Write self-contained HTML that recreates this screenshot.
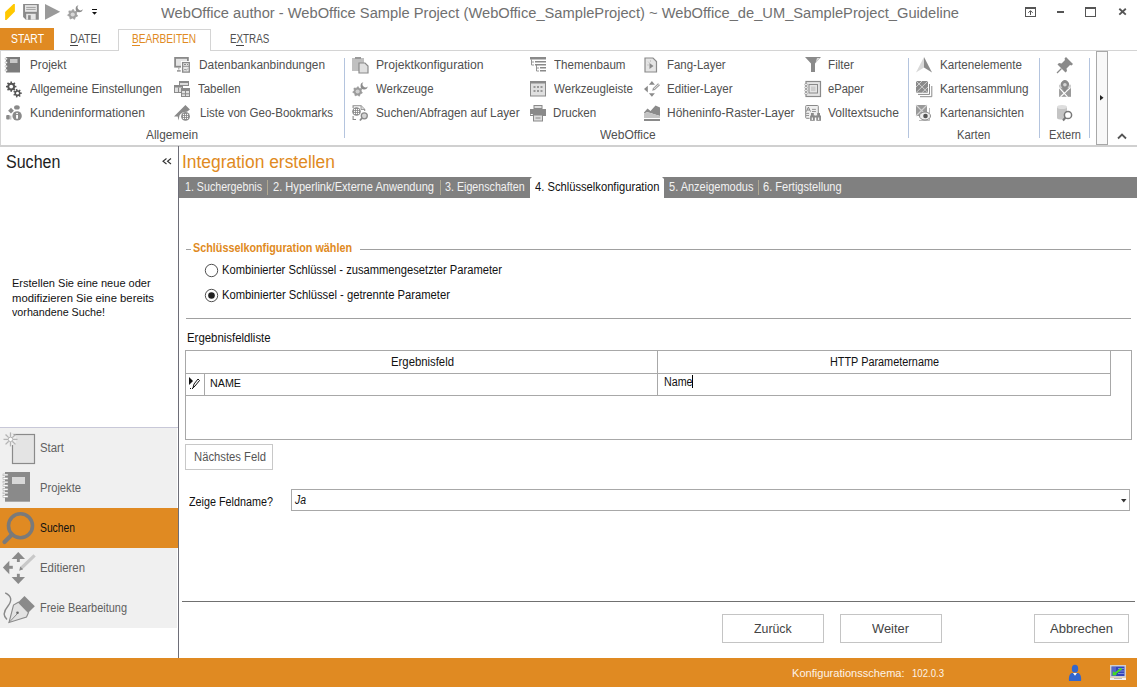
<!DOCTYPE html>
<html><head><meta charset="utf-8"><style>
html,body{margin:0;padding:0;}
body{width:1137px;height:687px;overflow:hidden;background:#fff;position:relative;font-family:"Liberation Sans", sans-serif;}
.t{position:absolute;white-space:pre;font-family:"Liberation Sans", sans-serif;}
svg{overflow:visible}
</style></head><body>
<svg style="position:absolute;left:0px;top:0px" width="64" height="24" viewBox="0 0 64 24"><polygon points="5.1,12.1 13.5,3.9 14.9,3.9 14.9,11.5 6.5,20 5.1,20" fill="#FFC800"/><path d="M23.1,3.9 H38.8 V19.7 H25.9 L23.1,16.9 Z" fill="#8a8a8a"/><rect x="25" y="5.1" width="11.9" height="6.7" fill="#e6e6e6"/><rect x="26.2" y="6.9" width="9.5" height="0.9" fill="#999"/><rect x="26.2" y="8.9" width="9.5" height="0.9" fill="#999"/><rect x="26.2" y="13.8" width="9.5" height="5.9" fill="#e6e6e6"/><rect x="28.1" y="15.2" width="2.6" height="4.5" fill="#8a8a8a"/><polygon points="45,3.9 60.2,11.8 45,19.7" fill="#9a9a9a"/></svg>
<svg style="position:absolute;left:60px;top:0px" width="30" height="25" viewBox="0 0 30 25"><polygon points="17.67,16.04 15.34,16.95 14.60,19.34 12.43,18.09 10.10,19.00 9.72,16.53 7.56,15.27 9.26,13.44 8.89,10.96 11.39,11.15 13.09,9.31 14.50,11.38 17.00,11.57 16.26,13.97" fill="#a0a0a0" stroke="#a0a0a0" stroke-width="0.8" stroke-linejoin="round"/><circle cx="12.7" cy="14.5" r="2.1" fill="#d8d8d8"/><path d="M18.5,5.2 A3.6,3.6 0 1 0 22.8,9.3 A2.6,2.6 0 1 1 18.5,5.2 Z" fill="#8c8c8c"/></svg>
<svg style="position:absolute;left:92px;top:9px" width="6" height="7" viewBox="0 0 6 7"><rect x="0" y="0" width="5" height="1" fill="#111"/><polygon points="0,3 5,3 2.5,5.8" fill="#111"/></svg>
<svg style="position:absolute;left:1017px;top:0" width="120" height="26" viewBox="1017 0 120 26"><rect x="1025" y="7" width="11" height="2" fill="#555"/><rect x="1025" y="7" width="1" height="10" fill="#555"/><rect x="1035" y="7" width="1" height="10" fill="#555"/><rect x="1025" y="16" width="11" height="1" fill="#555"/><rect x="1030" y="11" width="1" height="4" fill="#555"/><path d="M1028.3,12.8 L1030.5,10.6 L1032.7,12.8" fill="none" stroke="#555" stroke-width="1"/><rect x="1057" y="11" width="7" height="2" fill="#555"/><rect x="1085" y="7" width="11" height="2" fill="#555"/><rect x="1085" y="7" width="1" height="10" fill="#555"/><rect x="1095" y="7" width="1" height="10" fill="#555"/><rect x="1085" y="16" width="11" height="1" fill="#555"/><path d="M1119.3,8.8 L1125.8,14.6 M1125.8,8.8 L1119.3,14.6" stroke="#555" stroke-width="1.9"/></svg>
<div style="position:absolute;left:0px;top:28px;width:54px;height:22px;background:#E08A22"></div>
<div style="position:absolute;left:70px;top:44.5px;width:8px;height:1px;background:#444"></div>
<div style="position:absolute;left:118px;top:29px;width:93px;height:22px;background:#fff;border:1px solid #d4d4d4;border-bottom:none;box-sizing:border-box"></div>
<div style="position:absolute;left:132px;top:44.5px;width:8px;height:1px;background:#E08A22"></div>
<div style="position:absolute;left:236px;top:44.5px;width:8px;height:1px;background:#444"></div>
<div style="position:absolute;left:0px;top:50px;width:118px;height:1px;background:#d4d4d4"></div>
<div style="position:absolute;left:211px;top:50px;width:926px;height:1px;background:#d4d4d4"></div>
<div style="position:absolute;left:0px;top:50px;width:1px;height:96px;background:#d4d4d4"></div>
<div style="position:absolute;left:0px;top:145px;width:1137px;height:2px;background:#d0d0d0"></div>
<div style="position:absolute;left:344px;top:58px;width:1px;height:80px;background:#b4c4de"></div>
<div style="position:absolute;left:908px;top:58px;width:1px;height:80px;background:#b4c4de"></div>
<div style="position:absolute;left:1039px;top:58px;width:1px;height:80px;background:#b4c4de"></div>
<div style="position:absolute;left:1089px;top:58px;width:1px;height:80px;background:#b4c4de"></div>
<div style="position:absolute;left:1096px;top:51px;width:12px;height:94px;background:#f8f8f8;border:1px solid #a8a8a8;box-sizing:border-box"></div>
<svg style="position:absolute;left:1100px;top:95px" width="4" height="6" viewBox="0 0 4 6"><polygon points="0,0 3.5,2.75 0,5.5" fill="#222"/></svg>
<svg style="position:absolute;left:1117px;top:133px" width="10" height="7" viewBox="0 0 10 7"><path d="M1,5.5 L5,1.5 L9,5.5" fill="none" stroke="#555" stroke-width="1.8"/></svg>
<div style="position:absolute;left:178px;top:146px;width:1px;height:512px;background:#6e6e78"></div>
<svg style="position:absolute;left:162px;top:158px" width="10" height="7" viewBox="0 0 10 7"><path d="M4.5,0.5 L1,3.25 L4.5,6 M9,0.5 L5.5,3.25 L9,6" fill="none" stroke="#333" stroke-width="1.1"/></svg>
<div style="position:absolute;left:0px;top:427px;width:178px;height:1px;background:#c8c8d8"></div>
<div style="position:absolute;left:0px;top:428px;width:177px;height:200px;background:#f0f0f0"></div>
<div style="position:absolute;left:0px;top:508px;width:178px;height:40px;background:#E08A22"></div>
<div style="position:absolute;left:179px;top:177px;width:958px;height:21px;background:#808080"></div>
<div style="position:absolute;left:530px;top:179px;width:134px;height:19px;background:#fff"></div>
<div style="position:absolute;left:532px;top:177px;width:130px;height:2px;background:#fff"></div>
<svg style="position:absolute;left:530px;top:177px" width="2" height="2" viewBox="0 0 2 2"><polygon points="0,0 2,0 0,2" fill="#808080"/><polygon points="2,0 2,2 0,2" fill="#fff"/></svg>
<svg style="position:absolute;left:662px;top:177px" width="2" height="2" viewBox="0 0 2 2"><polygon points="0,0 2,0 2,2" fill="#808080"/><polygon points="0,0 0,2 2,2" fill="#fff"/></svg>
<div style="position:absolute;left:267px;top:180px;width:1px;height:15px;background:#b0a890"></div>
<div style="position:absolute;left:440px;top:180px;width:1px;height:15px;background:#b0a890"></div>
<div style="position:absolute;left:758px;top:180px;width:1px;height:15px;background:#b0a890"></div>
<div style="position:absolute;left:186px;top:249px;width:5px;height:1px;background:#a0a0a0"></div>
<div style="position:absolute;left:360px;top:249px;width:771px;height:1px;background:#a0a0a0"></div>
<svg style="position:absolute;left:204px;top:263px" width="15" height="15" viewBox="0 0 15 15"><circle cx="7.5" cy="7.5" r="6.2" fill="#fff" stroke="#505050" stroke-width="1"/></svg>
<svg style="position:absolute;left:204px;top:288px" width="15" height="15" viewBox="0 0 15 15"><circle cx="7.5" cy="7.5" r="6.2" fill="#fff" stroke="#505050" stroke-width="1"/><circle cx="7.5" cy="7.5" r="3.3" fill="#222"/></svg>
<div style="position:absolute;left:186px;top:318px;width:945px;height:1px;background:#a0a0a0"></div>
<div style="position:absolute;left:185px;top:350px;width:947px;height:90px;border:1px solid #a8a8a8;box-sizing:border-box"></div>
<div style="position:absolute;left:185px;top:373px;width:926px;height:1px;background:#a8a8a8"></div>
<div style="position:absolute;left:185px;top:395px;width:926px;height:1px;background:#a8a8a8"></div>
<div style="position:absolute;left:1110px;top:350px;width:1px;height:46px;background:#a8a8a8"></div>
<div style="position:absolute;left:204px;top:373px;width:1px;height:23px;background:#a8a8a8"></div>
<div style="position:absolute;left:657px;top:350px;width:1px;height:46px;background:#a8a8a8"></div>
<div style="position:absolute;left:692px;top:375px;width:1px;height:13px;background:#000"></div>
<svg style="position:absolute;left:188px;top:376px" width="14" height="14" viewBox="0 0 14 14"><polygon points="1,1 5,5 1,9" fill="#111"/><path d="M5,12 L6,8 L10,3 L11.5,4.5 L7,10 Z" fill="none" stroke="#111" stroke-width="1"/><rect x="2" y="12" width="1" height="1" fill="#111"/><rect x="4" y="12" width="1" height="1" fill="#111"/></svg>
<div style="position:absolute;left:185px;top:444px;width:88px;height:26px;border:1px solid #c8c8c8;box-sizing:border-box;background:#fff"></div>
<div style="position:absolute;left:291px;top:489px;width:839px;height:22px;border:1px solid #a8a8a8;box-sizing:border-box;background:#fff"></div>
<svg style="position:absolute;left:1121px;top:499px" width="6" height="4" viewBox="0 0 6 4"><polygon points="0,0 5.5,0 2.75,3.5" fill="#333"/></svg>
<div style="position:absolute;left:182px;top:601px;width:953px;height:1px;background:#707070"></div>
<div style="position:absolute;left:722px;top:614px;width:102px;height:29px;border:1px solid #c4c4c4;box-sizing:border-box"></div>
<div style="position:absolute;left:840px;top:614px;width:102px;height:29px;border:1px solid #c4c4c4;box-sizing:border-box"></div>
<div style="position:absolute;left:1034px;top:614px;width:95px;height:29px;border:1px solid #c4c4c4;box-sizing:border-box"></div>
<div style="position:absolute;left:0px;top:658px;width:1137px;height:29px;background:#E08A22"></div>
<svg style="position:absolute;left:1068px;top:664px" width="14" height="18" viewBox="0 0 14 18"><ellipse cx="7" cy="4.7" rx="3.2" ry="3.9" fill="#3366cc"/><path d="M1,17 C0.5,13 1.5,9.5 4,9 L10,9 C12.5,9.5 13.5,13 13,17 Z" fill="#3366cc"/><polygon points="5,9 9,9 7,11.8" fill="#fff"/></svg>
<svg style="position:absolute;left:1110px;top:665px" width="16" height="15" viewBox="0 0 16 15"><rect x="0" y="0" width="16" height="12.5" fill="#d0d0d0"/><rect x="1.5" y="1.5" width="13" height="9.5" fill="#3344bb"/><path d="M8,3.5 H14.5 M8,6 H14.5 M8,8.5 H14.5" stroke="#8899dd" stroke-width="0.9"/><path d="M3,1.5 V11 M5,1.5 V11" stroke="#8899dd" stroke-width="0.8"/><path d="M11.5,3.5 L4.5,9" stroke="#44dd22" stroke-width="2"/><polygon points="2.5,10.5 3,6 7,10" fill="#44dd22"/><rect x="0" y="12.5" width="16" height="2.5" fill="#f4f4f4"/><rect x="4" y="13" width="8" height="1" fill="#bbb"/></svg>
<svg style="position:absolute;left:5px;top:57px" width="16" height="16" viewBox="0 0 16 16"><rect x="1" y="0" width="14" height="15.5" fill="#7c7c7c"/><rect x="5" y="2" width="7.5" height="4" fill="#c8c8c8"/><circle cx="1.2" cy="1.8" r="1.1" fill="#fff" stroke="#999" stroke-width="0.5"/><circle cx="1.2" cy="5.5" r="1.1" fill="#fff" stroke="#999" stroke-width="0.5"/><circle cx="1.2" cy="9.3" r="1.1" fill="#fff" stroke="#999" stroke-width="0.5"/><circle cx="1.2" cy="13.2" r="1.1" fill="#fff" stroke="#999" stroke-width="0.5"/></svg>
<svg style="position:absolute;left:6px;top:81px" width="16" height="16" viewBox="0 0 16 16"><circle cx="5.2" cy="5.6" r="3.9" fill="#555"/><line x1="5.2" y1="5.6" x2="10.40" y2="5.60" stroke="#555" stroke-width="1.6"/><line x1="5.2" y1="5.6" x2="8.88" y2="9.28" stroke="#555" stroke-width="1.6"/><line x1="5.2" y1="5.6" x2="5.20" y2="10.80" stroke="#555" stroke-width="1.6"/><line x1="5.2" y1="5.6" x2="1.52" y2="9.28" stroke="#555" stroke-width="1.6"/><line x1="5.2" y1="5.6" x2="0.00" y2="5.60" stroke="#555" stroke-width="1.6"/><line x1="5.2" y1="5.6" x2="1.52" y2="1.92" stroke="#555" stroke-width="1.6"/><line x1="5.2" y1="5.6" x2="5.20" y2="0.40" stroke="#555" stroke-width="1.6"/><line x1="5.2" y1="5.6" x2="8.88" y2="1.92" stroke="#555" stroke-width="1.6"/><circle cx="5.2" cy="5.6" r="1.9" fill="#fff"/><circle cx="11.5" cy="12.2" r="3.0" fill="#555"/><line x1="11.5" y1="12.2" x2="15.80" y2="12.20" stroke="#555" stroke-width="1.4"/><line x1="11.5" y1="12.2" x2="14.18" y2="15.56" stroke="#555" stroke-width="1.4"/><line x1="11.5" y1="12.2" x2="10.54" y2="16.39" stroke="#555" stroke-width="1.4"/><line x1="11.5" y1="12.2" x2="7.63" y2="14.07" stroke="#555" stroke-width="1.4"/><line x1="11.5" y1="12.2" x2="7.63" y2="10.33" stroke="#555" stroke-width="1.4"/><line x1="11.5" y1="12.2" x2="10.54" y2="8.01" stroke="#555" stroke-width="1.4"/><line x1="11.5" y1="12.2" x2="14.18" y2="8.84" stroke="#555" stroke-width="1.4"/><circle cx="11.5" cy="12.2" r="1.4" fill="#fff"/></svg>
<svg style="position:absolute;left:6px;top:105px" width="16" height="16" viewBox="0 0 16 16"><ellipse cx="10.9" cy="2.4" rx="2.8" ry="2.2" fill="#8a8a8a"/><polygon points="5,2.8 7.9,5.7 5,8.6 2.1,5.7" fill="#8a8a8a"/><rect x="0.2" y="10.1" width="3.6" height="4.5" rx="1" fill="#8a8a8a"/><rect x="3.8" y="10.6" width="1.6" height="4" fill="#c8c8c8"/><circle cx="11.1" cy="10.9" r="4.7" fill="#8a8a8a"/><rect x="10.1" y="7.9" width="1.9" height="1" fill="#fff"/><rect x="10.1" y="9.9" width="1.9" height="3.8" fill="#fff"/></svg>
<svg style="position:absolute;left:174px;top:57px" width="16" height="16" viewBox="0 0 16 16"><rect x="1.1" y="0.9" width="12.8" height="8.8" fill="#e4e4e4" stroke="#8a8a8a" stroke-width="1.8"/><rect x="4.4" y="10.6" width="0.9" height="2" fill="#8a8a8a"/><rect x="3" y="13.2" width="3.7" height="1.4" fill="#8a8a8a"/><rect x="7" y="4" width="9.9" height="12.7" fill="#fff"/><rect x="8.6" y="5.6" width="6.7" height="9.5" fill="#e8e8e8" stroke="#8a8a8a" stroke-width="1.3"/><path d="M8.6,9.3 H15.3" stroke="#8a8a8a" stroke-width="0.9"/><rect x="10" y="7" width="2" height="1" fill="#8a8a8a"/><rect x="13" y="7" width="1" height="1" fill="#8a8a8a"/><path d="M9.8,13.5 L11,12 L12.2,13.3 L13.8,11.5" fill="none" stroke="#8a8a8a" stroke-width="0.8"/></svg>
<svg style="position:absolute;left:174px;top:81px" width="16" height="16" viewBox="0 0 16 16"><rect x="5" y="0" width="10" height="5" fill="#8a8a8a"/><rect x="6" y="2" width="8" height="2" fill="#ddd"/><rect x="0" y="4" width="9" height="8" fill="#8a8a8a"/><rect x="1" y="6.5" width="7" height="4.5" fill="#e0e0e0"/><rect x="4" y="6.5" width="1" height="4.5" fill="#8a8a8a"/><rect x="7" y="7" width="9" height="9" fill="#8a8a8a"/><rect x="8" y="10" width="7" height="5" fill="#e0e0e0"/><rect x="11" y="10" width="1" height="5" fill="#8a8a8a"/><rect x="8" y="12.3" width="7" height="1" fill="#8a8a8a"/></svg>
<svg style="position:absolute;left:174px;top:105px" width="16" height="16" viewBox="0 0 16 16"><path d="M0,11.4 L11.4,0 L15.9,4.5 L13,6.8 Q7,7 5.5,10.5 L4.5,15.6 L3.7,11.5 Z" fill="#8a8a8a"/><circle cx="11.5" cy="11.4" r="4.4" fill="#8a8a8a"/><rect x="8.95" y="8.85" width="1.1" height="1.1" fill="#fff"/><rect x="8.95" y="10.85" width="1.1" height="1.1" fill="#fff"/><rect x="8.95" y="12.85" width="1.1" height="1.1" fill="#fff"/><rect x="10.95" y="8.85" width="1.1" height="1.1" fill="#fff"/><rect x="10.95" y="10.85" width="1.1" height="1.1" fill="#fff"/><rect x="10.95" y="12.85" width="1.1" height="1.1" fill="#fff"/><rect x="12.95" y="8.85" width="1.1" height="1.1" fill="#fff"/><rect x="12.95" y="10.85" width="1.1" height="1.1" fill="#fff"/><rect x="12.95" y="12.85" width="1.1" height="1.1" fill="#fff"/></svg>
<svg style="position:absolute;left:352px;top:57px" width="16" height="16" viewBox="0 0 16 16"><rect x="0" y="1" width="12" height="13" fill="#c0c0c0"/><rect x="3" y="0" width="6" height="2" fill="#999"/><path d="M7,6 H13 L16,9 V16 H7 Z" fill="#e0e0e0" stroke="#8a8a8a" stroke-width="1.2"/></svg>
<svg style="position:absolute;left:352px;top:81px" width="16" height="16" viewBox="0 0 16 16"><polygon points="10.38,11.98 8.16,12.88 7.42,15.16 5.34,13.99 3.10,14.83 2.71,12.47 0.66,11.24 2.26,9.47 1.94,7.10 4.32,7.24 5.98,5.51 7.35,7.47 9.73,7.69 9.06,9.98" fill="#9a9a9a" stroke="#9a9a9a" stroke-width="0.7" stroke-linejoin="round"/><circle cx="5.6" cy="10.5" r="2.1" fill="#d0d0d0"/><path d="M11.4,1.3 A3.6,3.6 0 1 0 15.7,5.4 A2.6,2.6 0 1 1 11.4,1.3 Z" fill="#8c8c8c"/></svg>
<svg style="position:absolute;left:352px;top:105px" width="16" height="16" viewBox="0 0 16 16"><path d="M1.1,3 V0.7 H9 L12.7,4.5 V6" fill="none" stroke="#8a8a8a" stroke-width="1.1"/><path d="M1.1,11 V14.5 H4" fill="none" stroke="#8a8a8a" stroke-width="1.1"/><path d="M9,0.7 V4.5 H12.7" fill="#ddd" stroke="#8a8a8a" stroke-width="0.8"/><circle cx="4.5" cy="6.5" r="4.3" fill="#8a8a8a"/><rect x="1.9" y="3.9" width="1.2" height="1.2" fill="#fff"/><rect x="1.9" y="5.9" width="1.2" height="1.2" fill="#fff"/><rect x="1.9" y="7.9" width="1.2" height="1.2" fill="#fff"/><rect x="3.9" y="3.9" width="1.2" height="1.2" fill="#fff"/><rect x="3.9" y="5.9" width="1.2" height="1.2" fill="#fff"/><rect x="3.9" y="7.9" width="1.2" height="1.2" fill="#fff"/><rect x="5.9" y="3.9" width="1.2" height="1.2" fill="#fff"/><rect x="5.9" y="5.9" width="1.2" height="1.2" fill="#fff"/><rect x="5.9" y="7.9" width="1.2" height="1.2" fill="#fff"/><circle cx="12.3" cy="10.8" r="3" fill="#d4d4d4" stroke="#8a8a8a" stroke-width="1.3"/><path d="M10,13.2 L7.9,15.5" stroke="#8a8a8a" stroke-width="1.8"/></svg>
<svg style="position:absolute;left:530px;top:57px" width="16" height="16" viewBox="0 0 16 16"><rect x="0" y="0" width="16" height="2.5" fill="#8a8a8a"/><path d="M1.5,2.5 V8 H4 M1.5,5 H4 M6.5,8 V14 H9 M6.5,11 H9" fill="none" stroke="#8a8a8a" stroke-width="0.9"/><rect x="5" y="4" width="11" height="1.5" fill="#8a8a8a"/><rect x="5" y="7" width="11" height="1.5" fill="#8a8a8a"/><rect x="10" y="10" width="6" height="1.5" fill="#8a8a8a"/><rect x="10" y="13" width="6" height="1.5" fill="#8a8a8a"/></svg>
<svg style="position:absolute;left:530px;top:81px" width="16" height="16" viewBox="0 0 16 16"><rect x="0.5" y="0.5" width="15" height="14.5" fill="#e0e0e0" stroke="#8a8a8a" stroke-width="1"/><rect x="0" y="0" width="16" height="2.5" fill="#8a8a8a"/><rect x="3.5" y="5" width="2" height="2" fill="#999"/><rect x="3.5" y="9" width="2" height="2" fill="#999"/><rect x="7" y="5" width="2" height="2" fill="#999"/><rect x="7" y="9" width="2" height="2" fill="#999"/><rect x="10.5" y="5" width="2" height="2" fill="#999"/><rect x="10.5" y="9" width="2" height="2" fill="#999"/></svg>
<svg style="position:absolute;left:530px;top:105px" width="16" height="16" viewBox="0 0 16 16"><rect x="3.5" y="0" width="9" height="4" fill="#8a8a8a"/><rect x="4.5" y="1" width="7" height="2" fill="#ddd"/><rect x="0" y="4" width="16" height="7" fill="#8a8a8a"/><rect x="0.8" y="9" width="2" height="1" fill="#fff"/><rect x="3.5" y="10" width="9" height="6" fill="#ddd" stroke="#8a8a8a" stroke-width="1"/><rect x="5.5" y="12.5" width="5" height="1" fill="#8a8a8a"/></svg>
<svg style="position:absolute;left:644px;top:57px" width="16" height="16" viewBox="0 0 16 16"><path d="M1,1 H9 L12.5,4.5 V15 H1 Z" fill="#e4e4e4" stroke="#8a8a8a" stroke-width="1.2"/><polygon points="5.5,6 9.5,9 5.5,12" fill="#8a8a8a"/><path d="M6.5,3 V5 M3,8 H5 M4,4.5 L5.5,6" stroke="#bbb" stroke-width="0.7"/></svg>
<svg style="position:absolute;left:644px;top:81px" width="16" height="16" viewBox="0 0 16 16"><polygon points="4.9,3.7 7.9,0 10.9,3.7" fill="#8a8a8a"/><polygon points="4.9,12.2 7.9,15.8 10.9,12.2" fill="#8a8a8a"/><polygon points="3.8,4.8 0,8.1 3.8,11.4" fill="#8a8a8a"/><path d="M9.6,8.4 L15,3.2" stroke="#8a8a8a" stroke-width="2.6"/><path d="M9.8,8.2 L14.8,3.4" stroke="#e0e0e0" stroke-width="1.1"/><polygon points="8.2,9.8 8.9,7.5 10.5,9.1" fill="#8a8a8a"/></svg>
<svg style="position:absolute;left:644px;top:105px" width="16" height="16" viewBox="0 0 16 16"><path d="M0,7.5 L3.5,3.5 L6.5,6 L11.5,0.5 L16,2.5 V11 L11,9.5 L6.5,8 L3,7.3 L0,8.5 Z" fill="#8a8a8a"/><path d="M0,8.5 L3,7.3 L6.5,8 L11,9.5 L16,11 V13 H0 Z" fill="#c4c4c4"/><rect x="0" y="14" width="16" height="2" fill="#8a8a8a"/></svg>
<svg style="position:absolute;left:805px;top:57px" width="16" height="16" viewBox="0 0 16 16"><polygon points="0,0 16,0 10,6.5 10,15 6,15 6,6.5" fill="#8a8a8a"/><polygon points="12,1 15,1 10.5,6" fill="#ddd"/></svg>
<svg style="position:absolute;left:805px;top:81px" width="16" height="16" viewBox="0 0 16 16"><rect x="1" y="0.5" width="14.5" height="15" fill="#e4e4e4" stroke="#8a8a8a" stroke-width="1.2"/><rect x="4" y="3.5" width="8.5" height="8.5" fill="none" stroke="#8a8a8a" stroke-width="1"/><rect x="6" y="5.5" width="4.5" height="4.5" fill="#ccc"/><circle cx="1" cy="3.5" r="1.2" fill="#fff" stroke="#8a8a8a" stroke-width="0.7"/><circle cx="1" cy="6.5" r="1.2" fill="#fff" stroke="#8a8a8a" stroke-width="0.7"/><circle cx="1" cy="9.5" r="1.2" fill="#fff" stroke="#8a8a8a" stroke-width="0.7"/><circle cx="1" cy="12.5" r="1.2" fill="#fff" stroke="#8a8a8a" stroke-width="0.7"/></svg>
<svg style="position:absolute;left:805px;top:105px" width="16" height="16" viewBox="0 0 16 16"><rect x="0.7" y="0.5" width="12.6" height="12.8" rx="0.8" fill="#efefef" stroke="#8a8a8a" stroke-width="1"/><path d="M1.3,6.6 L3.4,2.1 L5.5,6.6 M2.2,5 H4.6" fill="none" stroke="#8a8a8a" stroke-width="1"/><path d="M7,4.4 H10.9 M7,6.5 H10.9 M1.1,8.4 H4.1 M1.1,10.5 H4.1" stroke="#8a8a8a" stroke-width="0.9"/><rect x="4.6" y="10.2" width="11.9" height="6" fill="#fff"/><rect x="5.1" y="10.5" width="4.7" height="5.3" fill="#8a8a8a"/><rect x="11.3" y="10.5" width="4.7" height="5.3" fill="#8a8a8a"/><rect x="6" y="8" width="2.8" height="3" fill="#8a8a8a"/><rect x="12.2" y="8" width="2.8" height="3" fill="#8a8a8a"/><rect x="9" y="10.5" width="3" height="2" fill="#8a8a8a"/><rect x="6.7" y="12.5" width="1.3" height="2.5" fill="#eee"/><rect x="12.9" y="12.5" width="1.3" height="2.5" fill="#eee"/></svg>
<svg style="position:absolute;left:916px;top:57px" width="16" height="16" viewBox="0 0 16 16"><polygon points="8,0 8,10.5 0,15.5" fill="#d8d8d8"/><polygon points="8,0 16,15.5 8,10.5" fill="#8a8a8a"/></svg>
<svg style="position:absolute;left:916px;top:81px" width="16" height="16" viewBox="0 0 16 16"><rect x="0" y="0" width="12" height="11.7" fill="#8a8a8a"/><path d="M0,0 L12,11.7 M12,0 L0,11.7 M0,6 L6,0 M6,11.7 L12,6" stroke="#cfcfcf" stroke-width="1"/><path d="M13.5,3 V13.4 H2" fill="none" stroke="#8a8a8a" stroke-width="1"/><path d="M15.8,5 V15.7 H4" fill="none" stroke="#8a8a8a" stroke-width="1"/></svg>
<svg style="position:absolute;left:916px;top:105px" width="16" height="16" viewBox="0 0 16 16"><rect x="0" y="0" width="11" height="11" fill="#9a9a9a"/><path d="M0,0 L11,11 M11,0 L0,11" stroke="#d4d4d4" stroke-width="1.1"/><path d="M13.5,3 V15.5 H3" fill="none" stroke="#aaa" stroke-width="0.8"/><ellipse cx="9" cy="11" rx="5.5" ry="4" fill="#eee" stroke="#8a8a8a" stroke-width="1"/><circle cx="9.5" cy="11" r="2.3" fill="#555"/></svg>
<svg style="position:absolute;left:1057px;top:57px" width="16" height="16" viewBox="0 0 16 16"><polygon points="9,0 16,7 14.5,8.5 13,8 9.5,11.5 10,14 8.5,15.5 0.5,7.5 2,6 4.5,6.5 8,3 7.5,1.5" fill="#8a8a8a"/><path d="M4.5,11.5 L0,16" stroke="#8a8a8a" stroke-width="1.3"/></svg>
<svg style="position:absolute;left:1058px;top:81px" width="16" height="16" viewBox="0 0 16 16"><rect x="1.1" y="3.9" width="11.9" height="11.9" fill="#9a9a9a"/><rect x="1.1" y="3.9" width="11.9" height="3" fill="#d0d0d0"/><path d="M1.1,6.6 L9.5,15.8 M12.4,6.6 L2.5,15.8" stroke="#fff" stroke-width="1.2"/><path d="M6.9,11.3 L3.4,5.5 A4.1,4.1 0 1 1 10.4,5.5 Z" fill="#8a8a8a"/><circle cx="6.9" cy="3.7" r="1.8" fill="#d4d4d4"/></svg>
<svg style="position:absolute;left:1057px;top:105px" width="16" height="16" viewBox="0 0 16 16"><path d="M0,2 V13 C0,15 10,15 10,13 V2 Z" fill="#c4c4c4"/><ellipse cx="5" cy="2" rx="5" ry="2" fill="#dedede"/><circle cx="11" cy="10" r="3.6" fill="#fff" stroke="#777" stroke-width="1.5"/><path d="M8.5,12.5 L6,15.5" stroke="#777" stroke-width="2"/></svg>
<svg style="position:absolute;left:0;top:0" width="178" height="687"><rect x="12.5" y="434.5" width="22" height="29" fill="#e4e4e4" stroke="#8a8a8a" stroke-width="1.2"/><circle cx="10.5" cy="439.4" r="6" fill="#efefef"/><line x1="13.00" y1="439.40" x2="17.50" y2="439.40" stroke="#b4b4b4" stroke-width="1.3"/><line x1="12.27" y1="441.17" x2="15.45" y2="444.35" stroke="#b4b4b4" stroke-width="1.3"/><line x1="10.50" y1="441.90" x2="10.50" y2="446.40" stroke="#b4b4b4" stroke-width="1.3"/><line x1="8.73" y1="441.17" x2="5.55" y2="444.35" stroke="#b4b4b4" stroke-width="1.3"/><line x1="8.00" y1="439.40" x2="3.50" y2="439.40" stroke="#b4b4b4" stroke-width="1.3"/><line x1="8.73" y1="437.63" x2="5.55" y2="434.45" stroke="#b4b4b4" stroke-width="1.3"/><line x1="10.50" y1="436.90" x2="10.50" y2="432.40" stroke="#b4b4b4" stroke-width="1.3"/><line x1="12.27" y1="437.63" x2="15.45" y2="434.45" stroke="#b4b4b4" stroke-width="1.3"/><circle cx="10.5" cy="439.4" r="2.2" fill="#fff" stroke="#b4b4b4" stroke-width="1"/><rect x="5" y="472" width="25" height="29.7" fill="#8a8a8a"/><rect x="12" y="477" width="13" height="7" fill="#d8d8d8"/><rect x="3" y="474.0" width="5" height="1.8" fill="#fff" stroke="#999" stroke-width="0.5"/><rect x="3" y="477.6" width="5" height="1.8" fill="#fff" stroke="#999" stroke-width="0.5"/><rect x="3" y="481.2" width="5" height="1.8" fill="#fff" stroke="#999" stroke-width="0.5"/><rect x="3" y="484.8" width="5" height="1.8" fill="#fff" stroke="#999" stroke-width="0.5"/><rect x="3" y="488.4" width="5" height="1.8" fill="#fff" stroke="#999" stroke-width="0.5"/><rect x="3" y="492.0" width="5" height="1.8" fill="#fff" stroke="#999" stroke-width="0.5"/><rect x="3" y="495.6" width="5" height="1.8" fill="#fff" stroke="#999" stroke-width="0.5"/><circle cx="20.5" cy="525.8" r="12" fill="none" stroke="#7a7a7a" stroke-width="3.6"/><path d="M12,534.5 L4.5,542" stroke="#7a7a7a" stroke-width="4.2" stroke-linecap="round"/><polygon points="11.6,559 18.3,552 25,559" fill="#8a8a8a"/><rect x="16.9" y="558.5" width="2.9" height="3.5" fill="#8a8a8a"/><polygon points="11.6,577 18.3,584 25,577" fill="#8a8a8a"/><rect x="16.9" y="573.8" width="2.9" height="3.5" fill="#8a8a8a"/><polygon points="9.3,560.8 2.9,567.5 9.3,574.2" fill="#8a8a8a"/><rect x="9" y="565.8" width="3.8" height="3" fill="#8a8a8a"/><path d="M22,567.5 L33.5,556.5" stroke="#c8c8c8" stroke-width="3.2" stroke-linecap="square"/><polygon points="19.2,570.7 20.2,566.5 23.2,569.3" fill="#8a8a8a"/><path d="M5.2,592.8 C12,596 12,601 8,606 C3,612 3,616 7,619.5" fill="none" stroke="#8a8a8a" stroke-width="1.4"/><polygon points="24.5,596 34.8,606.3 28.5,612.5 18.3,602.2" fill="#8a8a8a"/><path d="M18.3,602.2 L28.5,612.5 L26.5,617 L9,622.5 L13.5,605 Z" fill="#e2e2e2" stroke="#8a8a8a" stroke-width="1.1"/><path d="M9,622.5 L17.5,613.5" stroke="#8a8a8a" stroke-width="1"/><circle cx="17.5" cy="612.8" r="1.3" fill="#666"/></svg>
<div class="t" style="left:161px;top:5px;font-size:15.4px;line-height:15.4px;color:#707070;transform:scaleX(0.9540);transform-origin:0 0;">WebOffice author - WebOffice Sample Project (WebOffice_SampleProject) ~ WebOffice_de_UM_SampleProject_Guideline</div>
<div class="t" style="left:11px;top:33px;font-size:12px;line-height:12px;color:#ffffff;transform:scaleX(0.8631);transform-origin:0 0;">START</div>
<div class="t" style="left:70px;top:33px;font-size:12px;line-height:12px;color:#505050;transform:scaleX(0.8882);transform-origin:0 0;">DATEI</div>
<div class="t" style="left:132.2px;top:33px;font-size:12px;line-height:12px;color:#E08A22;transform:scaleX(0.8444);transform-origin:0 0;">BEARBEITEN</div>
<div class="t" style="left:229.6px;top:33px;font-size:12px;line-height:12px;color:#505050;transform:scaleX(0.8185);transform-origin:0 0;">EXTRAS</div>
<div class="t" style="left:29.5px;top:59px;font-size:12px;line-height:12px;color:#505050;transform:scaleX(0.9743);transform-origin:0 0;">Projekt</div>
<div class="t" style="left:29.5px;top:83px;font-size:12px;line-height:12px;color:#505050;transform:scaleX(0.9795);transform-origin:0 0;">Allgemeine Einstellungen</div>
<div class="t" style="left:29.5px;top:107px;font-size:12px;line-height:12px;color:#505050;transform:scaleX(1.0079);transform-origin:0 0;">Kundeninformationen</div>
<div class="t" style="left:198.8px;top:59px;font-size:12px;line-height:12px;color:#505050;transform:scaleX(0.9886);transform-origin:0 0;">Datenbankanbindungen</div>
<div class="t" style="left:197.6px;top:83px;font-size:12px;line-height:12px;color:#505050;transform:scaleX(0.9530);transform-origin:0 0;">Tabellen</div>
<div class="t" style="left:199.8px;top:107px;font-size:12px;line-height:12px;color:#505050;transform:scaleX(0.9633);transform-origin:0 0;">Liste von Geo-Bookmarks</div>
<div class="t" style="left:376.4px;top:59px;font-size:12px;line-height:12px;color:#505050;transform:scaleX(1.0145);transform-origin:0 0;">Projektkonfiguration</div>
<div class="t" style="left:376.4px;top:83px;font-size:12px;line-height:12px;color:#505050;transform:scaleX(0.9507);transform-origin:0 0;">Werkzeuge</div>
<div class="t" style="left:376.4px;top:107px;font-size:12px;line-height:12px;color:#505050;transform:scaleX(0.9828);transform-origin:0 0;">Suchen/Abfragen auf Layer</div>
<div class="t" style="left:554.4px;top:59px;font-size:12px;line-height:12px;color:#505050;transform:scaleX(0.9656);transform-origin:0 0;">Themenbaum</div>
<div class="t" style="left:554.4px;top:83px;font-size:12px;line-height:12px;color:#505050;transform:scaleX(0.9654);transform-origin:0 0;">Werkzeugleiste</div>
<div class="t" style="left:553.2px;top:107px;font-size:12px;line-height:12px;color:#505050;transform:scaleX(0.9690);transform-origin:0 0;">Drucken</div>
<div class="t" style="left:667.4px;top:59px;font-size:12px;line-height:12px;color:#505050;transform:scaleX(0.9548);transform-origin:0 0;">Fang-Layer</div>
<div class="t" style="left:667.4px;top:83px;font-size:12px;line-height:12px;color:#505050;transform:scaleX(0.9643);transform-origin:0 0;">Editier-Layer</div>
<div class="t" style="left:667.4px;top:107px;font-size:12px;line-height:12px;color:#505050;transform:scaleX(0.9964);transform-origin:0 0;">Höheninfo-Raster-Layer</div>
<div class="t" style="left:828.1px;top:59px;font-size:12px;line-height:12px;color:#505050;transform:scaleX(0.9748);transform-origin:0 0;">Filter</div>
<div class="t" style="left:828.1px;top:83px;font-size:12px;line-height:12px;color:#505050;transform:scaleX(0.9302);transform-origin:0 0;">ePaper</div>
<div class="t" style="left:828.1px;top:107px;font-size:12px;line-height:12px;color:#505050;transform:scaleX(1.0040);transform-origin:0 0;">Volltextsuche</div>
<div class="t" style="left:940.1px;top:59px;font-size:12px;line-height:12px;color:#505050;transform:scaleX(0.9677);transform-origin:0 0;">Kartenelemente</div>
<div class="t" style="left:940.1px;top:83px;font-size:12px;line-height:12px;color:#505050;transform:scaleX(0.9766);transform-origin:0 0;">Kartensammlung</div>
<div class="t" style="left:939.5px;top:107px;font-size:12px;line-height:12px;color:#505050;transform:scaleX(0.9685);transform-origin:0 0;">Kartenansichten</div>
<div class="t" style="left:146px;top:129px;font-size:12px;line-height:12px;color:#505050;transform:scaleX(0.9867);transform-origin:0 0;">Allgemein</div>
<div class="t" style="left:599.6px;top:129px;font-size:12px;line-height:12px;color:#505050;transform:scaleX(1.0001);transform-origin:0 0;">WebOffice</div>
<div class="t" style="left:957.2px;top:129px;font-size:12px;line-height:12px;color:#505050;transform:scaleX(0.9418);transform-origin:0 0;">Karten</div>
<div class="t" style="left:1049.4px;top:129px;font-size:12px;line-height:12px;color:#505050;transform:scaleX(0.9225);transform-origin:0 0;">Extern</div>
<div class="t" style="left:6.3px;top:153px;font-size:18px;line-height:18px;color:#1e1e1e;transform:scaleX(0.8909);transform-origin:0 0;">Suchen</div>
<div class="t" style="left:12.3px;top:278px;font-size:11px;line-height:11px;color:#111;transform:scaleX(1.0035);transform-origin:0 0;">Erstellen Sie eine neue oder</div>
<div class="t" style="left:12.3px;top:293px;font-size:11px;line-height:11px;color:#111;transform:scaleX(1.0276);transform-origin:0 0;">modifizieren Sie eine bereits</div>
<div class="t" style="left:12.3px;top:307px;font-size:11px;line-height:11px;color:#111;transform:scaleX(0.9746);transform-origin:0 0;">vorhandene Suche!</div>
<div class="t" style="left:40.4px;top:442px;font-size:12px;line-height:12px;color:#606060;transform:scaleX(0.9470);transform-origin:0 0;">Start</div>
<div class="t" style="left:40.4px;top:482px;font-size:12px;line-height:12px;color:#606060;transform:scaleX(0.9312);transform-origin:0 0;">Projekte</div>
<div class="t" style="left:40.4px;top:522px;font-size:12px;line-height:12px;color:#111;transform:scaleX(0.8599);transform-origin:0 0;">Suchen</div>
<div class="t" style="left:40.4px;top:562px;font-size:12px;line-height:12px;color:#606060;transform:scaleX(0.9499);transform-origin:0 0;">Editieren</div>
<div class="t" style="left:40.4px;top:602px;font-size:12px;line-height:12px;color:#606060;transform:scaleX(0.9120);transform-origin:0 0;">Freie Bearbeitung</div>
<div class="t" style="left:182px;top:153px;font-size:18px;line-height:18px;color:#E08A22;transform:scaleX(0.9677);transform-origin:0 0;">Integration erstellen</div>
<div class="t" style="left:185.3px;top:181px;font-size:12px;line-height:12px;color:#f2f2f2;transform:scaleX(0.8878);transform-origin:0 0;">1. Suchergebnis</div>
<div class="t" style="left:273px;top:181px;font-size:12px;line-height:12px;color:#f2f2f2;transform:scaleX(0.9247);transform-origin:0 0;">2. Hyperlink/Externe Anwendung</div>
<div class="t" style="left:445.4px;top:181px;font-size:12px;line-height:12px;color:#f2f2f2;transform:scaleX(0.8903);transform-origin:0 0;">3. Eigenschaften</div>
<div class="t" style="left:534.8px;top:181px;font-size:12px;line-height:12px;color:#111;transform:scaleX(0.9324);transform-origin:0 0;">4. Schlüsselkonfiguration</div>
<div class="t" style="left:668.7px;top:181px;font-size:12px;line-height:12px;color:#f2f2f2;transform:scaleX(0.9179);transform-origin:0 0;">5. Anzeigemodus</div>
<div class="t" style="left:763.2px;top:181px;font-size:12px;line-height:12px;color:#f2f2f2;transform:scaleX(0.9205);transform-origin:0 0;">6. Fertigstellung</div>
<div class="t" style="left:193px;top:242px;font-size:12px;line-height:12px;color:#E08A22;transform:scaleX(0.8998);transform-origin:0 0;font-weight:bold;">Schlüsselkonfiguration wählen</div>
<div class="t" style="left:222.3px;top:264px;font-size:12px;line-height:12px;color:#111;transform:scaleX(0.9309);transform-origin:0 0;">Kombinierter Schlüssel - zusammengesetzter Parameter</div>
<div class="t" style="left:222.3px;top:289px;font-size:12px;line-height:12px;color:#111;transform:scaleX(0.9365);transform-origin:0 0;">Kombinierter Schlüssel - getrennte Parameter</div>
<div class="t" style="left:187.2px;top:332px;font-size:12px;line-height:12px;color:#111;transform:scaleX(0.9493);transform-origin:0 0;">Ergebnisfeldliste</div>
<div class="t" style="left:391px;top:356px;font-size:12px;line-height:12px;color:#111;transform:scaleX(0.9443);transform-origin:0 0;">Ergebnisfeld</div>
<div class="t" style="left:830px;top:356px;font-size:12px;line-height:12px;color:#111;transform:scaleX(0.9046);transform-origin:0 0;">HTTP Parametername</div>
<div class="t" style="left:210.3px;top:378px;font-size:11px;line-height:11px;color:#111;transform:scaleX(0.9754);transform-origin:0 0;">NAME</div>
<div class="t" style="left:663.6px;top:376px;font-size:12px;line-height:12px;color:#111;transform:scaleX(0.8902);transform-origin:0 0;">Name</div>
<div class="t" style="left:193.7px;top:451px;font-size:12px;line-height:12px;color:#555;transform:scaleX(0.9387);transform-origin:0 0;">Nächstes Feld</div>
<div class="t" style="left:189.2px;top:496px;font-size:12px;line-height:12px;color:#111;transform:scaleX(0.8994);transform-origin:0 0;">Zeige Feldname?</div>
<div class="t" style="left:295px;top:494px;font-size:12px;line-height:12px;color:#111;transform:scaleX(0.8670);transform-origin:0 0;font-style:italic;">Ja</div>
<div class="t" style="left:753.5px;top:622px;font-size:13px;line-height:13px;color:#444;transform:scaleX(0.9488);transform-origin:0 0;">Zurück</div>
<div class="t" style="left:872px;top:622px;font-size:13px;line-height:13px;color:#444;transform:scaleX(0.9912);transform-origin:0 0;">Weiter</div>
<div class="t" style="left:1050px;top:622px;font-size:13px;line-height:13px;color:#444;transform:scaleX(1.0017);transform-origin:0 0;">Abbrechen</div>
<div class="t" style="left:792.3px;top:668px;font-size:11px;line-height:11px;color:#fdf3e8;transform:scaleX(1.0062);transform-origin:0 0;">Konfigurationsschema:</div>
<div class="t" style="left:912px;top:668px;font-size:11px;line-height:11px;color:#fdf3e8;transform:scaleX(0.8719);transform-origin:0 0;">102.0.3</div>
</body></html>
